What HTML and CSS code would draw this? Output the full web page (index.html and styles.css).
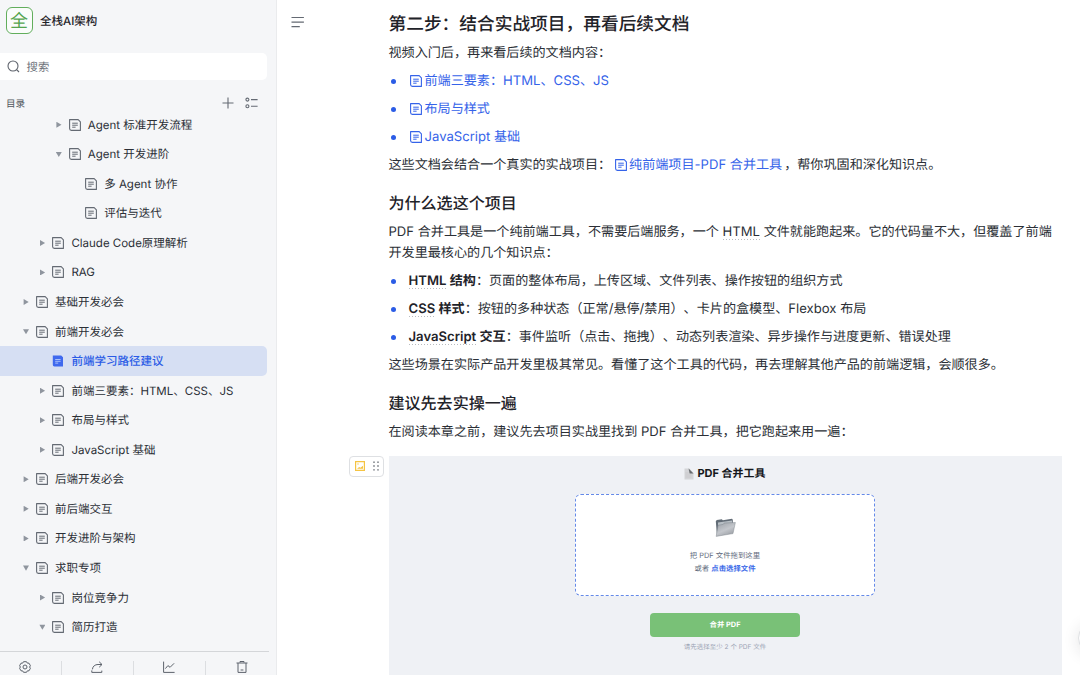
FILE: index.html
```html
<!DOCTYPE html>
<html lang="zh-CN">
<head>
    <meta charset="UTF-8">
    <meta name="viewport" content="width=device-width, initial-scale=1.0">
    <title>前端学习路径建议</title>
    <link rel="stylesheet" href="styles.css">
</head>
<body>
    <svg class="sprite">
        <symbol id="doc" viewBox="0 0 12 12">
            <path d="M.6.6h8.6l2.2 2.2v8.6H2.4A1.8 1.8 0 0 1 .6 9.6z" fill="none" stroke="currentColor" stroke-width="1.1" stroke-linejoin="round"/>
            <path d="M3.2 4.2h5.6M3.2 6.2h5.6M3.2 8.2h3.4" fill="none" stroke="currentColor"/>
        </symbol>
        <symbol id="doc-fill" viewBox="0 0 12 12">
            <path d="M.8.6h8.4l1.8 1.6v9.2H2.4A1.6 1.6 0 0 1 .8 9.8z" fill="currentColor"/>
            <path d="M3.2 4.5h5.4M3.2 6.3h5.4M3.2 8.1h3" fill="none" stroke="#b5c8fb" stroke-width=".9"/>
        </symbol>
    </svg>

    <aside class="sidebar">
        <div class="brand">
            <span class="logo">全</span>
            <span class="brand-name">全栈AI架构</span>
        </div>
        <div class="search">
            <svg width="13" height="13" viewBox="0 0 13 13" fill="none" stroke="#5f646d" stroke-width="1.1"><circle cx="6" cy="6" r="5"/><path d="M9.6 9.6l2.4 2.4"/></svg>
            <span>搜索</span>
        </div>
        <div class="toc-head">
            <span>目录</span>
            <svg width="12" height="12" viewBox="0 0 12 12" fill="none" stroke="#646a73" stroke-width="1.1"><path d="M6 .5v11M.5 6h11"/></svg>
            <svg width="13" height="12" viewBox="0 0 13 12" fill="none" stroke="#646a73" stroke-width="1.1"><circle cx="2.4" cy="2.6" r="1.5"/><circle cx="2.4" cy="9.2" r="1.5"/><path d="M6 2.6h6.6M6 9.2h6.6"/></svg>
        </div>
        <nav class="tree">
            <div class="node l3"><i class="arrow"></i><svg class="doc"><use href="#doc"/></svg>Agent 标准开发流程</div>
            <div class="node l3"><i class="arrow open"></i><svg class="doc"><use href="#doc"/></svg>Agent 开发进阶</div>
            <div class="node l4"><i class="arrow none"></i><svg class="doc"><use href="#doc"/></svg>多 Agent 协作</div>
            <div class="node l4"><i class="arrow none"></i><svg class="doc"><use href="#doc"/></svg>评估与迭代</div>
            <div class="node l2"><i class="arrow"></i><svg class="doc"><use href="#doc"/></svg>Claude Code原理解析</div>
            <div class="node l2"><i class="arrow"></i><svg class="doc"><use href="#doc"/></svg>RAG</div>
            <div class="node l1"><i class="arrow"></i><svg class="doc"><use href="#doc"/></svg>基础开发必会</div>
            <div class="node l1"><i class="arrow open"></i><svg class="doc"><use href="#doc"/></svg>前端开发必会</div>
            <div class="node l2 active"><i class="arrow none"></i><svg class="doc"><use href="#doc-fill"/></svg>前端学习路径建议</div>
            <div class="node l2"><i class="arrow"></i><svg class="doc"><use href="#doc"/></svg>前端三要素：HTML、CSS、JS</div>
            <div class="node l2"><i class="arrow"></i><svg class="doc"><use href="#doc"/></svg>布局与样式</div>
            <div class="node l2"><i class="arrow"></i><svg class="doc"><use href="#doc"/></svg>JavaScript 基础</div>
            <div class="node l1"><i class="arrow"></i><svg class="doc"><use href="#doc"/></svg>后端开发必会</div>
            <div class="node l1"><i class="arrow"></i><svg class="doc"><use href="#doc"/></svg>前后端交互</div>
            <div class="node l1"><i class="arrow"></i><svg class="doc"><use href="#doc"/></svg>开发进阶与架构</div>
            <div class="node l1"><i class="arrow open"></i><svg class="doc"><use href="#doc"/></svg>求职专项</div>
            <div class="node l2"><i class="arrow"></i><svg class="doc"><use href="#doc"/></svg>岗位竞争力</div>
            <div class="node l2"><i class="arrow open"></i><svg class="doc"><use href="#doc"/></svg>简历打造</div>
            <div class="node l3"><i class="arrow none"></i><svg class="doc"><use href="#doc"/></svg></div>
        </nav>
        <div class="tools">
            <div class="tool"><svg width="12" height="12" viewBox="0 0 12 12"><path d="M4.5.7h3l.8 1.4 1.7.1 1.4 2.5-.8 1.3.8 1.3L10 9.8l-1.7.1-.8 1.4h-3l-.8-1.4L2 9.8.6 7.3 1.4 6 .6 4.7 2 2.2l1.7-.1z"/><circle cx="6" cy="6" r="2"/></svg></div>
            <div class="tool"><svg width="12" height="12" viewBox="0 0 12 12"><path d="M.8 9.4v2h10V9.6M1.4 8.4C1.7 5.2 4 3.5 7 3.5h4M8.2.8L11 3.5 8.2 6.2"/></svg></div>
            <div class="tool"><svg width="12" height="12" viewBox="0 0 12 12"><path d="M.6.6v10.8h11M2.4 7.6l2.5-3 2.2 1.7 4-4"/></svg></div>
            <div class="tool"><svg width="12" height="12" viewBox="0 0 12 12"><path d="M.5 2h11M4 1.6V.5h4v1.1M2 2v9.4h8V2M4.6 9h2.8"/></svg></div>
        </div>
    </aside>

    <main class="main">
        <svg class="menu" width="14" height="12" viewBox="0 0 14 12" fill="none" stroke="#646a73" stroke-width="1.2"><path d="M.5 1.5h12.4M.5 6.2h12.4M.5 10.7h8.3"/></svg>
        <article class="article">
            <h2>第二步：结合实战项目，再看后续文档</h2>
            <p>视频入门后，再来看后续的文档内容：</p>
            <ul>
                <li><a><svg class="doc"><use href="#doc"/></svg>前端三要素：HTML、CSS、JS</a></li>
                <li><a><svg class="doc"><use href="#doc"/></svg>布局与样式</a></li>
                <li><a><svg class="doc"><use href="#doc"/></svg>JavaScript 基础</a></li>
            </ul>
            <p>这些文档会结合一个真实的实战项目：<a class="inline"><svg class="doc"><use href="#doc"/></svg>纯前端项目-PDF 合并工具</a>，帮你巩固和深化知识点。</p>

            <h3>为什么选这个项目</h3>
            <p>PDF 合并工具是一个纯前端工具，不需要后端服务，一个 <abbr>HTML</abbr> 文件就能跑起来。它的代码量不大，但覆盖了前端<br>开发里最核心的几个知识点：</p>
            <ul>
                <li><b><abbr>HTML</abbr> 结构</b>：页面的整体布局，上传区域、文件列表、操作按钮的组织方式</li>
                <li><b><abbr>CSS</abbr> 样式</b>：按钮的多种状态（正常/悬停/禁用）、卡片的盒模型、Flexbox 布局</li>
                <li><b><abbr>JavaScript</abbr> 交互</b>：事件监听（点击、拖拽）、动态列表渲染、异步操作与进度更新、错误处理</li>
            </ul>
            <p>这些场景在实际产品开发里极其常见。看懂了这个工具的代码，再去理解其他产品的前端逻辑，会顺很多。</p>

            <h3>建议先去实操一遍</h3>
            <p>在阅读本章之前，建议先去项目实战里找到 PDF 合并工具，把它跑起来用一遍：</p>

            <div class="figure">
                <div class="handle">
                    <svg width="10" height="10" viewBox="0 0 10 10" fill="none" stroke="#f5c443" stroke-width="1.2"><path d="M.6.6h8.8v8.8H.6z"/><path d="M2 7.8l2.2-1.7 1.2.7L8 4.7v3.1z" fill="#f5c443" stroke="none"/><circle cx="3" cy="3" r=".7" fill="#f5c443" stroke="none"/></svg>
                    <svg width="6" height="10" viewBox="0 0 6 10" fill="#85898f"><circle cx="1" cy="1.2" r=".9"/><circle cx="5" cy="1.2" r=".9"/><circle cx="1" cy="5" r=".9"/><circle cx="5" cy="5" r=".9"/><circle cx="1" cy="8.8" r=".9"/><circle cx="5" cy="8.8" r=".9"/></svg>
                </div>
                <div class="demo-title">
                    <svg width="10" height="12" viewBox="0 0 10 12"><path d="M.5.5h5L9.5 5v6.5h-9z" fill="#d4d5d8"/><path d="M4.6.5L9.5 5.6H5.6z" fill="#686c70"/><path d="M1.5 5h3M1.5 7h6M1.5 9h6" stroke="#c3c5c8" stroke-width=".6"/></svg>
                    PDF 合并工具
                </div>
                <div class="dropzone">
                    <svg width="21" height="19" viewBox="0 0 21 19">
                        <defs><linearGradient id="fold" x2=".6" y2="1"><stop stop-color="#9a9fa6"/><stop offset=".6" stop-color="#c4c7cc"/><stop offset="1" stop-color="#9da1a7"/></linearGradient></defs>
                        <path d="M.8 3.3L1.8 2l5-.7 1 .9L17 .7l.8 1v4L2 18z" fill="#626c76"/>
                        <path d="M3 4.5l14-2v4L3 8z" fill="#b8bfc5"/>
                        <path d="M3 7.2l5.2-.8 1-1.4L20.4 4.5 18 15.6 1.2 18.4z" fill="url(#fold)" stroke="#747b83" stroke-width=".4"/>
                    </svg>
                    <div class="drop-text">把 PDF 文件拖到这里<br>或者 <b>点击选择文件</b></div>
                </div>
                <div class="merge">合并 PDF</div>
                <div class="hint">请先选择至少 2 个 PDF 文件</div>
            </div>
        </article>
        <div class="float-btn"></div>
    </main>
</body>
</html>
```
FILE: styles.css
```css
* { box-sizing: border-box; }
body {
    margin: 0;
    height: 675px;
    display: flex;
    overflow: hidden;
    background: #fff;
    color: #2b2f36;
    font-family: Inter, "Noto Sans CJK SC", sans-serif;
    text-rendering: geometricPrecision;
    text-spacing-trim: space-all;
}
.sprite { position: absolute; width: 0; height: 0; }
svg { flex: none; }
.doc { width: 12px; height: 12px; }

/* sidebar */
.sidebar {
    width: 277px;
    height: 675px;
    flex: none;
    display: flex;
    flex-direction: column;
    background: #f5f6f8;
    border-right: 1px solid #eaebed;
}
.brand {
    display: flex;
    align-items: center;
    gap: 7.5px;
    height: 34px;
    margin-bottom: 19px;
    padding: 7px 0 0 5.5px;
}
.logo {
    width: 27px;
    height: 27px;
    border: 1px solid #62ae5c;
    border-radius: 6px;
    background: #fafcfb;
    color: #55a54e;
    font-size: 18px;
    font-weight: 400;
    line-height: 27px;
    text-align: center;
}
.brand-name {
    font-size: 11.5px;
    font-weight: 500;
    color: #1f2329;
}
.search {
    display: flex;
    align-items: center;
    gap: 7px;
    width: 267px;
    height: 27px;
    padding: 1px 0 0 6.5px;
    background: #fff;
    border-radius: 0 5px 5px 0;
    color: #6b7078;
    font-size: 11.4px;
}
.toc-head {
    display: flex;
    align-items: center;
    gap: 11px;
    height: 30px;
    padding: 17px 18px 0 6px;
    color: #51565d;
    font-size: 9.6px;
}
.toc-head span { margin-right: auto; }
.tree {
    height: 541.5px;
    overflow: hidden;
}
.node {
    display: flex;
    align-items: center;
    width: 267px;
    height: 29.56px;
    font-size: 11.5px;
    white-space: nowrap;
    color: #2b2f36;
}
.node .doc { margin: 0 7px; color: #646a73; }
.arrow {
    flex: none;
    width: 6px;
    height: 6px;
    margin-left: 3px;
    background: #8f959e;
    clip-path: polygon(10% 0, 95% 50%, 10% 100%);
}
.arrow.open { clip-path: polygon(0 10%, 100% 10%, 50% 95%); }
.arrow.none { visibility: hidden; }
.l1 { padding-left: 20px; }
.l2 { padding-left: 36.4px; }
.l3 { padding-left: 52.8px; }
.l4 { padding-left: 69.2px; }
.active {
    background: #d6dff3;
    border-radius: 0 5px 5px 0;
    color: #2b5ce6;
    font-weight: 500;
}
.node.active .doc { color: #3f69ee; }
.tools {
    display: flex;
    width: 269px;
    height: 24px;
    border-top: 1px solid #d4d6d9;
    padding-top: 9px;
}
.tool {
    flex: none;
    width: 72px;
    height: 14px;
    border-right: 1px solid #dcdee1;
    text-align: center;
    line-height: 0;
}
.tool:first-child { width: 61.5px; padding-right: 10px; }
.tool:last-child { border-right: 0; }
.tool svg {
    fill: none;
    stroke: #5d636c;
    stroke-width: 1;
    stroke-linejoin: round;
}

/* document */
.main {
    position: relative;
    flex: 1;
    display: flex;
    align-items: flex-start;
    overflow: hidden;
}
.menu { margin: 16px 83.5px 0 14px; }
.article {
    width: 673px;
    padding-top: 10.6px;
    font-size: 13.1px;
    line-height: 21.3px;
    white-space: nowrap;
}
h2, h3 {
    margin: 0;
    color: #1f2329;
    font-weight: 500;
}
h2 { font-size: 17.72px; line-height: 28px; }
h3 { font-size: 16.05px; line-height: 26px; margin-top: 13.7px; }
p { margin: 6.7px 0 0; }
h2 + p { margin-top: 4.8px; }
h3 + p { margin-top: 5.8px; }
ul {
    margin: 0;
    padding: 0;
    list-style: none;
}
li {
    display: flex;
    align-items: center;
    margin-top: 6.7px;
}
li::before {
    content: "";
    width: 5px;
    height: 5px;
    margin: -1px 12.5px 0 2.5px;
    border-radius: 50%;
    background: #2b5ce6;
}
a { color: #3563e9; }
a .doc {
    margin: 0 2.5px 0 1.5px;
    vertical-align: -1.5px;
}
a.inline { margin: 0 2px; }
b { font-weight: 600; color: #1f2329; }
abbr { background: repeating-linear-gradient(90deg, #b9bcc1 0 1px, transparent 1px 3px) left bottom / 100% 1px no-repeat; }

/* embedded demo picture */
.figure {
    position: relative;
    display: flex;
    flex-direction: column;
    align-items: center;
    height: 240px;
    margin-top: 12.2px;
    padding-top: 9px;
    background: #eff1f5;
}
.handle {
    position: absolute;
    left: -40px;
    top: 0;
    width: 35px;
    height: 21px;
    display: flex;
    align-items: center;
    justify-content: center;
    gap: 8px;
    padding-left: 1px;
    background: #fff;
    border: 1px solid #dee0e3;
    border-radius: 4px;
}
.demo-title {
    display: flex;
    align-items: center;
    gap: 3px;
    height: 18px;
    color: #16181c;
    font-size: 11px;
    font-weight: 700;
}
.dropzone {
    display: flex;
    flex-direction: column;
    align-items: center;
    width: 300px;
    height: 102px;
    margin-top: 11px;
    padding-top: 23px;
    background: #fff;
    border: 1px dashed #6489e8;
    border-radius: 6px;
}
.drop-text {
    margin-top: 12px;
    color: #626b7c;
    font-size: 7.4px;
    line-height: 13px;
    text-align: center;
}
.drop-text b { color: #3c6ae8; }
.merge {
    width: 150px;
    height: 24px;
    margin-top: 17px;
    background: #79c177;
    border-radius: 4px;
    color: #fff;
    font-size: 7.4px;
    font-weight: 700;
    line-height: 24px;
    text-align: center;
}
.hint {
    margin-top: 5px;
    color: #9ba3b4;
    font-size: 6.5px;
    line-height: 10px;
}
.float-btn {
    position: absolute;
    left: 801px;
    top: 622px;
    width: 32px;
    height: 32px;
    background: #fff;
    border: 1px solid #dee0e3;
    border-radius: 50%;
    box-shadow: 0 2px 16px rgba(31, 35, 41, .12);
}
```
